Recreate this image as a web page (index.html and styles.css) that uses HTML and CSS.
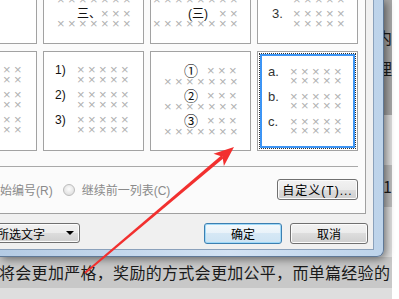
FILE: index.html
```html
<!DOCTYPE html>
<html>
  <head>
    <meta charset="utf-8">
    <title>项目符号和编号</title>
    <link rel="stylesheet" href="styles.css">
  </head>
  <body>
    <!-- document text behind the dialog -->
    <div class="doc">
      <div class="dl hl top">
        <div class="tx">内</div>
        <div class="tx">理</div>
        <div class="tx">，</div>
      </div>
      <div class="dl gap"></div>
      <div class="dl hl one"><div class="tx">1</div></div>
      <div class="dl gap"></div>
      <div class="dl hl para"><div class="tx">将会更加严格，奖励的方式会更加公平，而单篇经验的</div></div>
      <div class="dl rest"></div>
    </div>

    <div class="window">
      <div class="client">
        <div class="tabpage">
          <div class="gallery">
            <div class="tile top"></div>
            <div class="tile top t-cn">
              <div class="entry"><div class="ln"><span class="lab">一、</span><span class="x">×××</span></div><div class="ln cont"><span class="x">×××××××</span></div></div>
              <div class="entry"><div class="ln"><span class="lab">二、</span><span class="x">×××</span></div><div class="ln cont"><span class="x">×××××××</span></div></div>
              <div class="entry"><div class="ln"><span class="lab">三、</span><span class="x">×××</span></div><div class="ln cont"><span class="x">×××××××</span></div></div>
            </div>
            <div class="tile top t-cnp">
              <div class="entry"><div class="ln"><span class="lab">(一)</span><span class="x">××</span></div><div class="ln cont"><span class="x">××××××××</span></div></div>
              <div class="entry"><div class="ln"><span class="lab">(二)</span><span class="x">××</span></div><div class="ln cont"><span class="x">××××××××</span></div></div>
              <div class="entry"><div class="ln"><span class="lab">(三)</span><span class="x">××</span></div><div class="ln cont"><span class="x">××××××××</span></div></div>
            </div>
            <div class="tile top t-dot">
              <div class="entry"><div class="ln"><span class="lab">1.</span><span class="x">×××××</span></div><div class="ln cont"><span class="x">×××××</span></div></div>
              <div class="entry"><div class="ln"><span class="lab">2.</span><span class="x">×××××</span></div><div class="ln cont"><span class="x">×××××</span></div></div>
              <div class="entry"><div class="ln"><span class="lab">3.</span><span class="x">×××××</span></div><div class="ln cont"><span class="x">×××××</span></div></div>
            </div>

            <div class="tile t-num">
              <div class="entry"><div class="ln"><span class="lab">1.</span><span class="x">×××××</span></div><div class="ln cont"><span class="x">×××××</span></div></div>
              <div class="entry"><div class="ln"><span class="lab">2.</span><span class="x">×××××</span></div><div class="ln cont"><span class="x">×××××</span></div></div>
              <div class="entry"><div class="ln"><span class="lab">3.</span><span class="x">×××××</span></div><div class="ln cont"><span class="x">×××××</span></div></div>
            </div>
            <div class="tile t-num">
              <div class="entry"><div class="ln"><span class="lab">1)</span><span class="x">×××××</span></div><div class="ln cont"><span class="x">×××××</span></div></div>
              <div class="entry"><div class="ln"><span class="lab">2)</span><span class="x">×××××</span></div><div class="ln cont"><span class="x">×××××</span></div></div>
              <div class="entry"><div class="ln"><span class="lab">3)</span><span class="x">×××××</span></div><div class="ln cont"><span class="x">×××××</span></div></div>
            </div>
            <div class="tile t-circ">
              <div class="entry"><div class="ln"><span class="lab">①</span><span class="x">×××</span></div><div class="ln cont"><span class="x">×××××××</span></div></div>
              <div class="entry"><div class="ln"><span class="lab">②</span><span class="x">×××</span></div><div class="ln cont"><span class="x">×××××××</span></div></div>
              <div class="entry"><div class="ln"><span class="lab">③</span><span class="x">×××</span></div><div class="ln cont"><span class="x">×××××××</span></div></div>
            </div>
            <div class="tile sel t-alpha">
              <div class="ring">
                <div class="entry"><div class="ln"><span class="lab">a.</span><span class="x">×××××</span></div><div class="ln cont"><span class="x">×××××</span></div></div>
                <div class="entry"><div class="ln"><span class="lab">b.</span><span class="x">×××××</span></div><div class="ln cont"><span class="x">×××××</span></div></div>
                <div class="entry"><div class="ln"><span class="lab">c.</span><span class="x">×××××</span></div><div class="ln cont"><span class="x">×××××</span></div></div>
              </div>
            </div>
          </div>

          <div class="sep"></div>

          <div class="options">
            <span class="dim restart">重新开始编号(R)</span>
            <span class="radio"></span>
            <span class="dim">继续前一列表(C)</span>
            <button class="btn custom">自定义(T)...</button>
          </div>
        </div>

        <div class="footer">
          <div class="btn combo"><span>所选文字</span><span class="caret"></span></div>
          <button class="btn ok">确定</button>
          <button class="btn cancel">取消</button>
        </div>
      </div>
    </div>

    <svg class="arrow" width="399" height="299" viewBox="0 0 399 299">
      <polygon points="85.6,273.8 223.5,158.2 221.5,155.2 84.4,272.2" fill="#f2302f"/>
      <polygon points="234,147 223.9,166 222.5,156.7 213.5,153.8" fill="#f2302f"/>
    </svg>
  </body>
</html>
```

FILE: styles.css
```css
html, body {
  margin: 0;
  padding: 0;
}
body {
  position: relative;
  width: 399px;
  height: 299px;
  overflow: hidden;
  background: #fff;
  font-family: "Liberation Sans", "Noto Sans CJK SC", sans-serif;
  font-size: 12px;
  color: #000;
}

/* document behind the dialog */
.doc {
  display: flex;
  flex-direction: column;
  width: 392px;
  height: 299px;
  font-family: "Noto Sans CJK SC", sans-serif;
  font-size: 16px;
  color: #1a1a1a;
  text-align: right;
}
.dl {
  flex: none;
  background: #dedede;
}
.hl {
  background: #bdbdbd;
}
.dl .tx {
  height: 31px;
  line-height: 31px;
}
.dl.top {
  height: 115px;
  box-sizing: border-box;
  padding-top: 22px;
  background: #a8a8a8;
}
.dl.gap {
  height: 50px;
}
.dl.one {
  height: 42px;
}
.dl.one .tx {
  height: 42px;
  line-height: 42px;
}
.dl.para {
  height: 31px;
  background: #c8c8c8;
}
.dl.para .tx {
  text-align: left;
  margin-left: -1px;
  letter-spacing: 0.3px;
  white-space: nowrap;
}
.dl.rest {
  flex: 1;
}

/* dialog window */
.window {
  position: absolute;
  left: 0;
  top: 0;
  width: 384px;
  height: 257px;
  box-sizing: border-box;
  padding: 0 9px 6px 0;
  border-right: 1px solid #5f7896;
  border-bottom: 1px solid #5f7896;
  border-bottom-right-radius: 7px;
  background: linear-gradient(90deg, #b4cbe4, #d2e2f3 60%, #bdd3ea);
  box-shadow: 2px 2px 8px rgba(0, 0, 0, 0.5);
}
.client {
  height: 100%;
  box-sizing: border-box;
  display: flex;
  flex-direction: column;
  background: #f0f0f0;
  border-right: 1px solid #8ba1bb;
  border-bottom: 1px solid #8ba1bb;
}
.tabpage {
  flex: none;
  width: 366px;
  height: 214px;
  box-sizing: border-box;
  background: #fbfbfb;
  border-right: 1px solid #a0a0a0;
  border-bottom: 1px solid #a0a0a0;
}

/* bullet / numbering gallery */
.gallery {
  display: grid;
  grid-template-columns: repeat(4, 101px);
  grid-template-rows: repeat(2, 100px);
  column-gap: 6px;
  row-gap: 7px;
  margin: -56px 0 0 -64px;
}
.tile {
  box-sizing: border-box;
  display: flex;
  flex-direction: column;
  gap: 5px;
  padding-top: 13px;
  background: #fff;
  border: 1px solid #a2a2a2;
}
.tile.top {
  padding-top: 16px;
  gap: 4px;
}
.entry {
  display: flex;
  flex-direction: column;
}
.ln {
  display: flex;
  align-items: center;
  height: 10px;
  line-height: 10px;
  white-space: nowrap;
}
.lab {
  flex: none;
  color: #111;
  font-size: 12px;
}
.x {
  font-size: 13px;
  letter-spacing: 3.4px;
  color: #b0b0b0;
}

.t-num .ln { padding-left: 11px; }
.t-num .lab { width: 22px; }
.t-num .cont { padding-left: 33px; }

.t-circ { gap: 3px; }
.t-circ .ln { height: 11px; padding-left: 34px; }
.t-circ .lab { width: 23px; font-size: 14px; margin-left: -1px; }
.t-circ .cont { padding-left: 13px; }

.t-cn .ln { padding-left: 33px; }
.t-cn .lab { width: 24px; }
.t-cn .cont { padding-left: 13px; }

.t-cnp .ln { padding-left: 37px; }
.t-cnp .lab { width: 31px; }
.t-cnp .cont { padding-left: 2px; }

.t-dot .ln { padding-left: 14px; }
.t-dot .lab { width: 21px; font-size: 13px; color: #333; }
.t-dot .cont { padding-left: 35px; }

.tile.sel {
  padding: 1px;
}
.ring {
  flex: 1;
  display: flex;
  flex-direction: column;
  gap: 7px;
  padding-top: 13px;
  border: 1px dotted #333;
  box-shadow: inset 0 0 0 2px #3d95f5;
}
.t-alpha .ln { height: 9px; padding-left: 8px; }
.t-alpha .lab { width: 22px; font-size: 13px; color: #333; }
.t-alpha .cont { padding-left: 30px; }

.sep {
  width: 358px;
  height: 1px;
  margin-top: 15px;
  background: #a9a9a9;
}

.options {
  display: flex;
  align-items: center;
  height: 21px;
  margin-top: 12px;
  padding-right: 7px;
}
.dim {
  color: #8a8a8a;
  white-space: nowrap;
}
.restart {
  margin-left: -36px;
}
.radio {
  flex: none;
  width: 12px;
  height: 12px;
  box-sizing: border-box;
  margin: 0 7px 0 10px;
  border-radius: 50%;
  border: 1px solid #bcbcbc;
  background: radial-gradient(circle at 50% 40%, #fdfdfd, #e0e0e0 75%);
}

/* win7 push buttons */
.btn {
  flex: none;
  box-sizing: border-box;
  display: flex;
  align-items: center;
  justify-content: center;
  padding: 0;
  font-family: "Liberation Sans", "Noto Sans CJK SC", sans-serif;
  font-size: 12px;
  color: #000;
  border: 1px solid #707070;
  border-radius: 3px;
  background: linear-gradient(#f2f2f2, #ebebeb 50%, #dddddd 50%, #cfcfcf);
  box-shadow: inset 0 0 0 1px #fcfcfc;
}
.custom {
  margin-left: auto;
  width: 81px;
  height: 21px;
  letter-spacing: 1px;
}

.footer {
  display: flex;
  align-items: flex-start;
  height: 21px;
  margin-top: 9px;
  padding-right: 5px;
}
.combo {
  width: 87px;
  height: 20px;
  margin-left: -7px;
  justify-content: space-between;
  padding: 0 5px 0 3px;
}
.caret {
  width: 0;
  height: 0;
  border-left: 4px solid transparent;
  border-right: 4px solid transparent;
  border-top: 4px solid #000;
}
.ok {
  margin-left: auto;
  width: 78px;
  height: 21px;
  border-color: #3c7fb1;
  background: linear-gradient(#f4f9fc, #e8f2f9 50%, #d6e8f5 50%, #cde3f3);
  box-shadow: inset 0 0 0 1px #9fd9f8;
}
.cancel {
  margin-left: 8px;
  width: 78px;
  height: 21px;
}

.arrow {
  position: absolute;
  left: 0;
  top: 0;
  pointer-events: none;
}
```
